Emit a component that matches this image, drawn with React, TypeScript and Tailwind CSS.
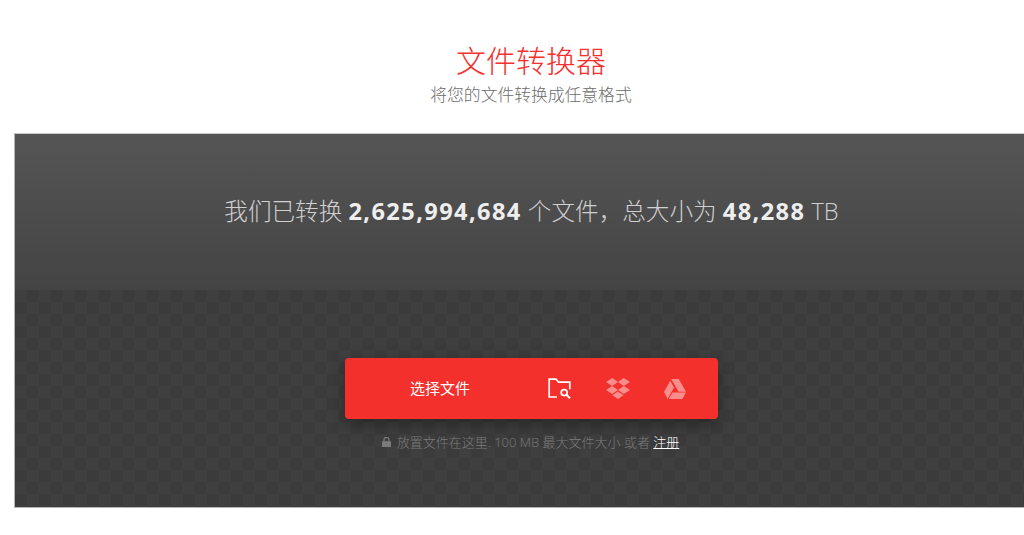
const cjk = "font-['Open_Sans','Noto_Sans_CJK_SC',sans-serif]"

const FolderSearch = () => (
  <svg width="24" height="22" viewBox="0 0 24 22" fill="none" stroke="#fff" strokeWidth="1.7">
    <path d="M9 19H1.2V1.2H8l2.6 3h11.2v7" />
    <circle cx="16.2" cy="14.6" r="3" />
    <path d="M18.4 16.8l3.6 3.4" strokeWidth="2" />
  </svg>
)

const Dropbox = () => (
  <svg width="24" height="21" viewBox="0 0 24 21" fill="#fff" fillOpacity="0.45">
    <path d="M6.2 0L0 4l6.2 4L12 4zM17.8 0L12 4l5.8 4L24 4zM0 12l6.2 4L12 12 6.2 8zM17.8 8L12 12l5.8 4L24 12zM6.4 17.3L12 21l5.6-3.7L12 13.6z" />
  </svg>
)

const Drive = () => (
  <svg width="22" height="20" viewBox="0 0 22 20" fill="#fff" fillOpacity="0.45">
    <path d="M7.2 0h7.6L22 12.8h-7.4zM6.2 1.8l3.8 6.6L3.6 20 0 13zM8.4 13.6H22L18.4 20H4.8z" />
  </svg>
)

const LockIcon = () => (
  <svg className="mr-[6px] ml-[-2px]" width="9" height="10" viewBox="0 0 9 10" fill="#7b7b7b">
    <path d="M0 4.2h9V10H0z" />
    <path d="M2 4.5V2.8a2.5 2.5 0 015 0v1.7" fill="none" stroke="#7b7b7b" strokeWidth="1.2" />
  </svg>
)

const App = () => {
  return (
    <div className={`h-[535px] w-[1024px] overflow-hidden bg-white ${cjk}`}>
      {/* the page runs wider than the window, so everything centres on x=531 */}
      <div className="w-[1062px]">
        <div className="flex h-[133px] flex-col items-center pt-[38px]">
          <h1 className="text-[30px] leading-[46px] font-light text-[#f5302e]">文件转换器</h1>
          <p className="text-[16.8px] leading-[21px] font-light text-[#6d6d6d]">将您的文件转换成任意格式</p>
        </div>
        <div className="mx-[14px] h-[375px] border-b border-l border-[#b5b5b5]">
          <div className="relative flex h-[157px] items-center justify-center border-t border-[#c9c9c9] bg-gradient-to-b from-[#555555] to-[#444444]">
            <p className="text-[23.6px] leading-none font-light text-[#d0d0d0]">
              我们已转换 <b className="font-bold tracking-[1.4px] text-[#eeeeee]">2,625,994,684</b> 个文件，总大小为{" "}
              <b className="font-bold tracking-[1.4px] text-[#eeeeee]">48,288</b> TB
            </p>
            <svg className="absolute top-[17px] right-[0px]" width="20" height="16" viewBox="0 0 20 16" fill="none" stroke="#8a8a8a" strokeWidth="1.5">
              <path d="M3 1l7 7-7 7M17 1l-7 7 7 7" />
            </svg>
          </div>
          <div className="flex h-[217px] flex-col items-center bg-[#3d3d3d] bg-[conic-gradient(#3b3b3b_25%,#3f3f3f_0_50%,#3b3b3b_0_75%,#3f3f3f_0)] bg-[length:24px_24px] pt-[68px]">
            <div className="flex h-[61px] w-[373px] items-center rounded-[4px] bg-[#f4302d] shadow-[0_6px_16px_rgba(0,0,0,0.35)]">
              <span className="ml-[65px] w-[138px] text-[15px] leading-none text-white">选择文件</span>
              <div className="flex items-center gap-[34px]">
                <FolderSearch />
                <Dropbox />
                <Drive />
              </div>
            </div>
            <p className="mt-[14px] flex items-center text-[13px] leading-[18px] font-light text-[#7b7b7b]">
              <LockIcon />
              放置文件在这里. 100 MB 最大文件大小 或者&nbsp;
              <a className="text-white underline">注册</a>
            </p>
          </div>
        </div>
      </div>
    </div>
  )
}

export default App
